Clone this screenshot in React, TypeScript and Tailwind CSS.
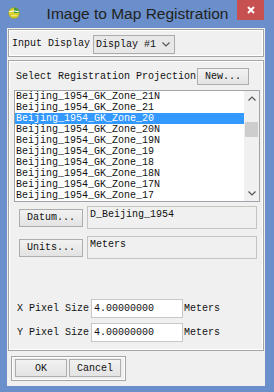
import React from "react";

const mono = "font-['Liberation_Mono',monospace] text-[10px] text-[#111]";
const btn =
  "flex items-center justify-center border border-[#adadad] bg-gradient-to-b from-[#f2f2f2] to-[#e3e3e3] font-['Liberation_Mono',monospace] text-[10px] text-[#111]";
const etched = "border border-[#a5a5a5] shadow-[inset_0_0_0_1px_#ffffff]";

const items = [
  "Beijing_1954_GK_Zone_21N",
  "Beijing_1954_GK_Zone_21",
  "Beijing_1954_GK_Zone_20",
  "Beijing_1954_GK_Zone_20N",
  "Beijing_1954_GK_Zone_19N",
  "Beijing_1954_GK_Zone_19",
  "Beijing_1954_GK_Zone_18",
  "Beijing_1954_GK_Zone_18N",
  "Beijing_1954_GK_Zone_17N",
  "Beijing_1954_GK_Zone_17",
];

function Chevron({ up }: { up?: boolean }) {
  return (
    <svg width="8" height="5" viewBox="0 0 8 5">
      <path
        d={up ? "M0.5 4.5 L4 1 L7.5 4.5" : "M0.5 0.5 L4 4 L7.5 0.5"}
        fill="none"
        stroke="#555"
        strokeWidth="1.2"
      />
    </svg>
  );
}

export default function App() {
  return (
    <div className="w-[274px] h-[392px] bg-[#6a8fca] flex flex-col">
      {/* Title bar */}
      <div className="h-[28px] grid grid-cols-[1fr_auto_1fr]">
        <div className="flex items-start pl-[8px] pt-[7px]">
          <svg width="12" height="12" viewBox="0 0 12 12">
            <circle cx="6" cy="6" r="5.5" fill="#d8cf2c" stroke="#8a8a30" strokeWidth="0.5" />
            <path d="M6 0.5 A5.5 5.5 0 0 1 11.5 6 L6 6 Z" fill="#3f9a3c" />
            <path d="M1 5 Q6 3 11 5" fill="none" stroke="#ffffff" strokeWidth="1.2" />
            <path d="M3 9 Q6 7.5 9.5 9" fill="none" stroke="#f6f2b0" strokeWidth="0.8" />
          </svg>
        </div>
        <div className="flex items-center pb-[1px] pl-[1px] font-['Liberation_Sans',Arial,sans-serif] text-[15.5px] text-[#222]">
          Image to Map Registration
        </div>
        <div className="flex justify-end items-start pr-[10px]">
          <div className="w-[27px] h-[20px] bg-[#c75050] flex items-center justify-center">
            <svg width="8" height="8" viewBox="0 0 8 8">
              <path d="M1 1 L7 7 M7 1 L1 7" stroke="#ffffff" strokeWidth="2" />
            </svg>
          </div>
        </div>
      </div>

      {/* Client */}
      <div className="ml-[7px] w-[258px] h-[358px] bg-[#f0f0f0] flex flex-col">
        {/* Panel 1 */}
        <div className={`mt-[1px] ml-[1px] w-[256px] h-[28px] flex items-center pl-[3px] ${etched}`}>
          <span className={mono}>Input Display</span>
          <div className="ml-[3px] mt-[3px] w-[82px] h-[19px] border border-[#acacac] bg-[#e8e8e8] flex items-center pl-[2px] pr-[4px]">
            <span className={mono}>Display #1</span>
            <span className="ml-auto flex items-center">
              <Chevron />
            </span>
          </div>
        </div>

        {/* Panel 2 */}
        <div className={`mt-[3px] ml-[1px] w-[256px] h-[291px] flex flex-col ${etched}`}>
          <div className="mt-[7px] flex items-center">
            <span className={`ml-[7px] ${mono}`}>Select Registration Projection</span>
            <div className={`ml-auto mr-[14px] w-[52px] h-[17px] ${btn}`}>New...</div>
          </div>

          {/* List */}
          <div className="mt-[5px] ml-[5px] w-[246px] h-[112px] border border-[#9fa3aa] bg-white flex">
            <div className="w-[229px] flex flex-col">
              {items.map((it, i) => (
                <div
                  key={it}
                  className={`h-[11px] leading-[11px] pl-[1px] whitespace-nowrap font-['Liberation_Mono',monospace] text-[10px] ${
                    i === 2 ? "bg-[#3399ff] text-white" : "text-[#111]"
                  }`}
                >
                  {it}
                </div>
              ))}
            </div>
            <div className="w-[15px] bg-[#f0f0f0] flex flex-col">
              <div className="h-[15px] flex items-center justify-center">
                <Chevron up />
              </div>
              <div className="flex-1 flex flex-col">
                <div className="mt-[16px] mx-[1px] h-[15px] bg-[#cdcdcd]" />
              </div>
              <div className="h-[15px] flex items-center justify-center">
                <Chevron />
              </div>
            </div>
          </div>

          {/* Datum */}
          <div className="mt-[4px] flex items-center">
            <div className={`ml-[10px] w-[64px] h-[18px] ${btn}`}>Datum...</div>
            <div className={`ml-[4px] w-[170px] h-[23px] border border-[#c3c3c3] bg-[#f0f0f0] pl-[2px] pt-[2px] leading-[12px] ${mono}`}>
              D_Beijing_1954
            </div>
          </div>

          {/* Units */}
          <div className="mt-[7px] flex items-center">
            <div className={`ml-[10px] w-[64px] h-[18px] ${btn}`}>Units...</div>
            <div className={`ml-[4px] w-[170px] h-[23px] border border-[#c3c3c3] bg-[#f0f0f0] pl-[2px] pt-[2px] leading-[12px] ${mono}`}>
              Meters
            </div>
          </div>

          {/* X pixel size */}
          <div className="mt-[40px] flex items-center">
            <span className={`ml-[8px] w-[74px] ${mono}`}>X Pixel Size</span>
            <div className="w-[92px] h-[19px] border border-[#c8c8c8] bg-white flex items-center pl-[2px]">
              <span className={mono}>4.00000000</span>
            </div>
            <span className={`ml-[1px] ${mono}`}>Meters</span>
          </div>

          {/* Y pixel size */}
          <div className="mt-[5px] flex items-center">
            <span className={`ml-[8px] w-[74px] ${mono}`}>Y Pixel Size</span>
            <div className="w-[92px] h-[19px] border border-[#c8c8c8] bg-white flex items-center pl-[2px]">
              <span className={mono}>4.00000000</span>
            </div>
            <span className={`ml-[1px] ${mono}`}>Meters</span>
          </div>
        </div>

        {/* OK / Cancel */}
        <div className={`mt-[5px] ml-[4px] w-[115px] h-[25px] flex items-start pl-[3px] pt-[2px] ${etched}`}>
          <div className={`w-[52px] h-[18px] ${btn}`}>OK</div>
          <div className={`ml-[2px] w-[52px] h-[18px] ${btn}`}>Cancel</div>
        </div>
      </div>
    </div>
  );
}
